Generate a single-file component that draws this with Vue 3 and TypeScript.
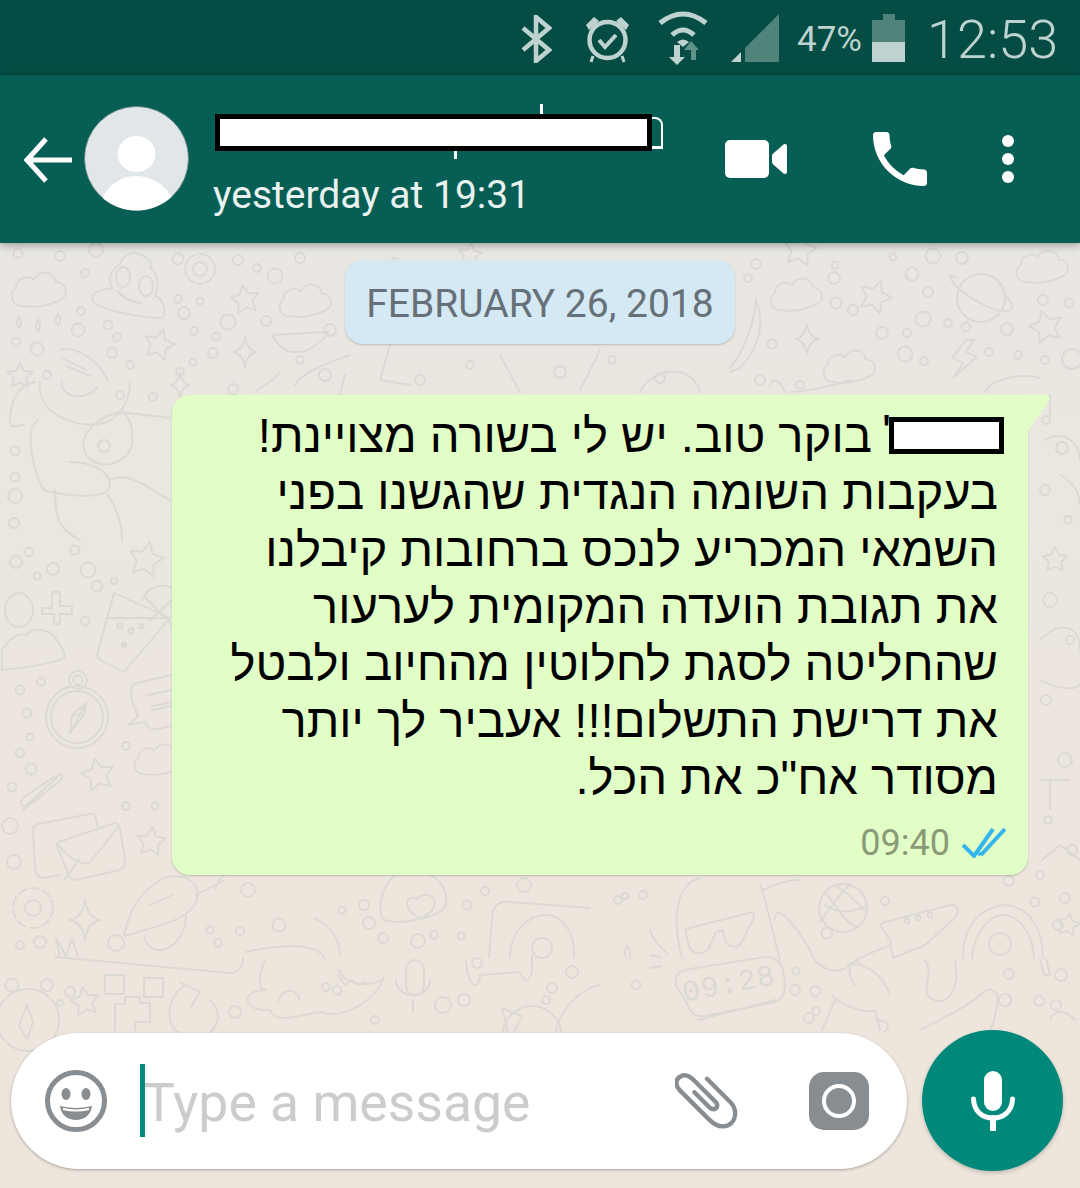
<script setup lang="ts">
// wallpaper doodles: [x, y, r]
const dots: number[][] = [
  [18,253,4.5],[60,256,5],[96,250,7],[85,273,4],[178,259,5.5],[238,260,5],[257,268,4],[275,276,7.5],[178,299,4],[200,301,3.5],[184,313,6],[81,311,4],[78,330,6.5],[108,325,4.5],[117,337,4],[228,322,7.5],[266,321,5],[194,331,4],[216,337,4],[16,342,4],[37,349,6.5],[112,353,5],[130,365,4],[193,362,3.5],[213,353,5],[180,372,4],[47,375,4],[153,397,4],[233,389,5],[15,451,4.5],[15,477,4.5],[15,496,7],[14,523,5],
  [756,264,5],[748,278,4],[834,278,6],[835,265,3.5],[912,274,6.5],[893,257,3.5],[933,256,7.5],[962,258,6],[928,292,5],[836,303,5.5],[853,310,5],[923,319,7.5],[882,333,6],[907,333,4],[948,323,4],[966,327,4.5],[1007,329,6],[1043,300,5],[1069,303,4.5],[772,344,4.5],[905,354,7.5],[924,361,4],[989,352,4],[1018,355,4],[1045,360,4],[1072,359,10],
  [16,562,6],[29,552,4.5],[37,576,3.5],[53,569,6],[75,550,4.5],[88,570,7.5],[97,586,5.5],[114,581,3],[85,621,4.5],[20,690,4.5],[41,682,4],[27,713,4.5],[30,737,3.5],[20,753,4.5],[31,769,5.5],[12,787,4.5],[126,746,4],[126,806,4],[155,806,3.5],[10,826,8],[14,862,7],[20,945,4],[40,942,6],[116,943,8],[47,985,6],[70,992,5],[60,1003,3],
  [235,1012,6],[218,943,4],[240,931,4.5],[210,930,3.5],[279,925,6.5],[342,910,3.5],[364,905,5],[369,923,6],[326,987,4],[337,990,4.5],[383,938,5],[418,941,7],[434,935,4],[461,936,3.5],[467,905,4.5],[485,891,4],[524,885,7],[443,1005,8],[464,1000,6],[552,988,5],[572,972,6],[546,1000,4],[375,1020,4],
  [618,900,4],[625,896,3],[643,895,4],[636,985,4.5],[796,971,3.5],[795,990,5],[815,991,5],[816,1011,4],[827,933,5.5],[885,901,4],[809,1018,5],[1009,881,5],[1035,902,4.5],[1065,898,5],[1058,925,5],[1009,974,5],[1005,1000,6],[1061,975,6],[1039,1001,5],[1056,1005,5],
  [1046,420,4],[1062,448,6],[1045,490,5],[1068,520,4],[1050,600,7],[1070,640,4],[1046,700,5],[1065,760,7],[1048,820,4],[1072,850,5],[1040,875,4],
  [300,360,4],[325,375,6],[395,262,4],[420,380,5],[470,365,4],[560,372,6],[612,360,4],[660,378,5],[300,258,5],[330,330,6],[760,380,5],[800,385,4],[120,395,4],
]
const stars: number[][] = [
  [245,300,15,-10],[159,345,16,15],[875,297,17,20],[800,250,17,10],[1046,327,17,-15],[98,775,17,-12],[151,842,15,5],[85,1002,15,-10],[20,376,13,0],[1068,925,12,10],[1055,560,13,0],[470,255,12,8],[146,560,18,12],
]
const sparks: number[][] = [[245,352,15],[807,339,15],[85,920,21],[180,385,12]]
const clouds: number[][] = [[10,268,1],[278,280,0.95],[769,274,0.95],[1015,246,0.95],[822,346,0.95],[133,740,0.9]]

function starPoints(cx: number, cy: number, r: number, rot: number) {
  const pts: string[] = []
  for (let i = 0; i < 10; i++) {
    const rad = i % 2 ? r * 0.5 : r
    const a = ((rot - 90 + i * 36) * Math.PI) / 180
    pts.push(`${(cx + rad * Math.cos(a)).toFixed(1)},${(cy + rad * Math.sin(a)).toFixed(1)}`)
  }
  return pts.join(" ")
}
function sparkPath(x: number, y: number, r: number) {
  const w = r * 0.75
  return `M${x} ${y - r}Q${x + 2} ${y - 2} ${x + w} ${y}Q${x + 2} ${y + 2} ${x} ${y + r}Q${x - 2} ${y + 2} ${x - w} ${y}Q${x - 2} ${y - 2} ${x} ${y - r}Z`
}

const lines = [
  "בעקבות השומה הנגדית שהגשנו בפני",
  "השמאי המכריע לנכס ברחובות קיבלנו",
  "את תגובת הועדה המקומית לערעור",
  "שהחליטה לסגת לחלוטין מהחיוב ולבטל",
  "את דרישת התשלום!!! אעביר לך יותר",
  'מסודר אח"כ את הכל.',
]
</script>

<template>
  <div class="phone">
    <div class="status">
      <svg class="st-bt" width="32" height="48" viewBox="0 0 32 48"><path d="M3 13 29 35 16 46V2L29 13 3 35" fill="none" stroke="#bed3cf" stroke-width="4.500" /></svg>
      <svg class="st-alarm" width="45" height="48" viewBox="0 0 45 48">
        <circle cx="22.500" cy="25" r="18" fill="none" stroke="#bed3cf" stroke-width="4.500" />
        <path d="M14 25l6 7 11-12" fill="none" stroke="#bed3cf" stroke-width="4" />
        <path d="M1 10 9 2l5 4-10 9zM44 10l-8-8-5 4 10 9z" fill="#bed3cf" />
        <path d="M8 41 6 47M37 41l2 6" stroke="#bed3cf" stroke-width="3" />
      </svg>
      <svg class="st-wifi" width="50" height="54" viewBox="0 0 50 54">
        <path d="M2 12Q25-6 48 12" fill="none" stroke="#bed3cf" stroke-width="5" />
        <path d="M14 24Q25 14 36 24" fill="none" stroke="#bed3cf" stroke-width="5" />
        <path d="M19 31Q25 26 31 31L25 36z" fill="#bed3cf" />
        <path d="M33 30 41 39H38V49H33V39H26z" fill="#5f9389" />
        <path d="M22 34V46H27L19 54 11 46H16V34z" fill="#bed3cf" />
      </svg>
      <svg class="st-signal" width="48" height="48" viewBox="0 0 48 48">
        <path d="M48 0V48H14V34z" fill="#50837a" />
        <path d="M0 48 10 38V48z" fill="#bed3cf" />
      </svg>
      <span class="st-pct">47%</span>
      <div class="st-batt"><i class="nub"></i><i class="empty"></i><i class="full"></i></div>
      <span class="st-time">12:53</span>
    </div>

    <header class="bar">
      <svg class="back" width="48" height="48" viewBox="0 0 48 48"><path d="M48 24H4M22 3 3 24l19 21" fill="none" stroke="#fff" stroke-width="5" /></svg>
      <svg class="avatar" width="105" height="105" viewBox="0 0 105 105">
        <defs><clipPath id="av"><circle cx="52.500" cy="52.500" r="52" /></clipPath></defs>
        <circle cx="52.500" cy="52.500" r="52" fill="#e1e6e8" stroke="#5d7f79" stroke-width="0.800" />
        <ellipse cx="52.500" cy="48" rx="19" ry="18" fill="#fff" />
        <path clip-path="url(#av)" d="M17 95C24 78 38 70 52 70S82 78 90 95L70 110H30z" fill="#fff" />
      </svg>
      <div class="who">
        <div class="name">
          <i class="mark m1"></i><i class="mark m2"></i><i class="mark m3"></i>
          <div class="redact"></div>
        </div>
        <div class="seen">yesterday at 19:31</div>
      </div>
      <div class="actions">
        <svg width="62" height="38" viewBox="0 0 62 38">
          <rect width="44" height="38" rx="5" fill="#fff" />
          <path d="M47 16c0-1 .4-1.800 1.200-2.400L58.500 4.500c1.300-1 3.500-.4 3.500 1.500v26c0 2-2.200 2.500-3.500 1.500L48.200 24.500c-.8-.6-1.200-1.400-1.200-2.400z" fill="#fff" />
        </svg>
        <svg class="call" width="54" height="54" viewBox="3 3 18 18"><path fill="#fff" d="M6.620 10.790c1.440 2.830 3.760 5.140 6.590 6.590l2.200-2.200c.27-.27.67-.36 1.020-.24 1.120.37 2.330.57 3.570.57.550 0 1 .45 1 1V20c0 .55-.45 1-1 1-9.390 0-17-7.610-17-17 0-.55.45-1 1-1h3.500c.55 0 1 .45 1 1 0 1.250.2 2.450.57 3.570.11.35.03.74-.25 1.020l-2.200 2.200z" /></svg>
        <div class="dots"><i></i><i></i><i></i></div>
      </div>
    </header>

    <main class="chat">
      <svg class="wall" width="1080" height="945" viewBox="0 243 1080 945" fill="none" stroke="#dbd9d3" stroke-width="1.900" stroke-linejoin="round" stroke-linecap="round">
        <circle v-for="(d, i) in dots" :key="'d' + i" :cx="d[0]" :cy="d[1]" :r="d[2]" />
        <polygon v-for="(s, i) in stars" :key="'s' + i" :points="starPoints(s[0], s[1], s[2], s[3])" />
        <path v-for="(s, i) in sparks" :key="'k' + i" :d="sparkPath(s[0], s[1], s[2])" />
        <g v-for="(c, i) in clouds" :key="'c' + i" :transform="`translate(${c[0]} ${c[1]}) scale(${c[2]})`">
          <path d="M12 38C2 38-2 26 6 20 6 10 18 6 24 12 28 2 44 2 46 14 56 14 60 28 50 32 38 38 24 40 12 38Z" />
        </g>
        <!-- poop -->
        <path d="M112 288C96 290 88 296 94 302 102 310 140 318 162 318 168 310 162 298 155 296 160 286 158 272 150 268 154 262 146 256 138 254 134 250 122 256 120 264 110 270 108 280 112 288Z" />
        <ellipse cx="123" cy="277" rx="7" ry="10" /><ellipse cx="146" cy="286" rx="7" ry="10" />
        <path d="M117 291Q130 303 142 303 125 302 117 291Z" />
        <!-- gear -->
        <circle cx="200" cy="269" r="7" /><circle cx="200" cy="269" r="15" stroke-dasharray="7 3" />
        <!-- drops -->
        <path d="M19 328q-4-4 0-11 4 7 0 11zM38 331q-4-4 0-12 4 8 0 12zM58 325q-5-6 0-11 5 7 0 11z" />
        <!-- wing and creature -->
        <path d="M60 350C72 346 96 356 108 380M62 358 86 370M66 366 90 376" />
        <path d="M40 382C36 410 70 428 100 424 120 420 130 400 130 382M62 382C60 398 88 402 98 386" />
        <path d="M35 382C20 384 10 400 10 420 10 430 18 425 24 425M38 420C22 430 36 480 44 490 60 495 100 500 108 490 115 478 100 462 70 462M122 412C100 415 80 432 84 450 90 470 124 470 132 445 134 425 128 415 122 412ZM120 412 170 418" />
        <circle cx="104" cy="446" r="6" />
        <path d="M55 490C55 520 60 530 80 540M108 495C118 510 122 525 122 540M110 480C130 470 150 490 170 500" />
        <!-- person -->
        <ellipse cx="19" cy="610" rx="14" ry="17" />
        <path d="M2 670V650C8 640 20 630 26 636 32 626 50 628 58 642 62 648 66 654 64 658 50 665 20 668 2 670Z" />
        <path d="M52 592h8v14h12v8H60v10h-6v-10H42v-6h10z" />
        <!-- glass and lemon -->
        <path d="M114 593 170 618 124 672 100 660 97 655zM110 618H168" />
        <circle cx="120" cy="626" r="2.500" /><circle cx="131" cy="631" r="2.500" /><circle cx="141" cy="626" r="2" />
        <circle cx="124" cy="645" r="2.500" fill="#dbd9d3" />
        <path d="M142 600A22 22 0 0 1 172 588M150 620 172 600M145 597 172 625" />
        <!-- compass -->
        <circle cx="77" cy="717" r="31" /><circle cx="77" cy="717" r="26" />
        <circle cx="78" cy="680" r="9" /><circle cx="78" cy="680" r="4.500" />
        <path d="M86 703 70 733 72 715zM86 703 84 715 70 733M72 715 84 715" />
        <!-- chat bubble -->
        <path d="M172 675 137 683C131 685 130 690 132 700L138 716 128 725 145 722 150 730 172 726" />
        <path d="M148 695 172 690M152 706 172 702M152 710 172 706" />
        <!-- paperclip -->
        <path d="M24 810 62 780C66 775 62 772 58 777L28 805M28 805C22 808 20 802 24 798L56 776" transform="translate(-1 0)" />
        <!-- envelopes -->
        <path d="M61 875 44 878C38 878 36 875 35 868L33 830C33 826 35 825 38 824L90 814C94 813 96 816 97 825" />
        <path d="M65 840 112 824C116 822 119 824 120 828L125 860C125 866 124 868 120 870L76 880C72 880 70 878 68 874L57 846C56 843 60 841 65 840ZM58 845C70 860 84 866 90 862L119 826M80 858 64 880" />
        <!-- gear two -->
        <circle cx="33" cy="908" r="8" /><circle cx="33" cy="908" r="20" stroke-dasharray="9 4" />
        <!-- drone -->
        <path d="M124 935C130 910 140 890 166 877 190 873 200 885 197 900 190 920 160 925 128 935 124 936 124 936 124 935ZM150 905 172 895M144 936C150 962 185 950 186 916M196 895 225 880M215 890C225 860 250 862 270 875" />
        <circle cx="248" cy="890" r="7" />
        <!-- fragments on seam -->
        <path d="M55 957 230 973Q243 972 243 958" />
        <path d="M60 957 56 938 66 956 72 938 78 956" />
        <!-- squares and steps -->
        <rect x="105" y="975" width="19" height="19" /><rect x="144" y="978" width="19" height="19" />
        <path d="M125 997H140V1003H150V1022H135V1030M125 997V1004H115V1030" />
        <!-- compass two -->
        <circle cx="28" cy="1020" r="31" /><circle cx="12" cy="985" r="6.500" />
        <path d="M27 1005 19 1025 27 1040 33 1022z" />
        <!-- arrow circle -->
        <path d="M186 985C166 995 164 1026 180 1033M210 1000C225 1015 216 1030 205 1036M180 982 200 992 190 1008" />
        <!-- heart helmet -->
        <path d="M395 875C378 890 378 915 384 920 400 925 440 918 446 905 448 890 440 880 430 875" />
        <path d="M418 917C402 910 405 893 417 899 422 892 437 893 434 907 432 912 425 918 418 917Z" />
        <!-- cloud creature -->
        <path d="M246 952C270 946 320 940 325 960M314 918C330 925 340 940 340 955" />
        <path d="M265 960C255 985 262 990 266 990 240 990 242 1012 270 1010 276 1025 300 1015 320 1012 345 1020 375 1000 384 978 375 985 350 990 338 970" />
        <path d="M300 1000C295 985 280 990 278 1002" />
        <path d="M338 975 345 985 352 980 358 985 366 982" />
        <!-- mic -->
        <rect x="406" y="960" width="18" height="35" rx="9" />
        <path d="M396 980C396 1000 430 1000 430 980M413 1000V1012" />
        <!-- record player -->
        <path d="M489 957 492 920C492 905 500 900 510 902L590 908M510 957C510 930 530 915 545 915 565 915 575 935 574 957" />
        <circle cx="542" cy="948" r="10" />
        <path d="M466 960C466 975 472 985 475 985 480 985 480 978 480 975L520 972C525 985 530 980 532 972L532 955" />
        <circle cx="477" cy="963" r="5" />
        <!-- play and citrus -->
        <circle cx="532" cy="1035" r="29" />
        <path d="M502 1008 522 1016 510 1040z" />
        <path d="M555 1040C556 1005 590 985 600 985" />
        <!-- sunglasses -->
        <path d="M682 958C672 920 675 885 700 878M760 884C766 900 772 930 780 960" />
        <path d="M685 929 753 912 754 918 740 945C730 950 725 945 723 930L716 932 708 950C698 956 690 954 688 942z" />
        <path d="M762 890C775 885 785 880 800 880" />
        <!-- digital clock -->
        <path d="M684 970 765 957C775 956 782 962 784 975 786 990 785 998 775 1002L705 1016C695 1017 690 1013 688 1005L676 985C675 977 678 972 684 970Z" />
        <path d="M698 1020 775 1000" />
        <text x="684" y="1002" transform="rotate(-11 684 1002)" class="digi">09:28</text>
        <path d="M650 930C655 945 665 950 668 955M650 955 662 958M650 968 662 966" />
        <path d="M625 955C625 940 630 945 630 958" />
        <!-- basketball -->
        <circle cx="843" cy="908" r="24" />
        <path d="M825 893C838 905 845 925 858 927M850 884C835 900 825 915 820 922M825 905C840 915 855 912 867 905M835 885C850 895 860 905 866 912" />
        <!-- skull blob -->
        <path d="M775 920C775 900 795 925 810 950 815 968 835 975 845 968 860 955 880 950 890 945M860 963C850 955 845 975 855 985" />
        <path d="M848 965C865 960 885 978 890 995M925 960C935 975 920 990 930 998 950 1010 960 985 955 960" />
        <!-- plane -->
        <path d="M885 922 950 905C958 905 960 910 955 918L925 945 893 958 890 940 880 925z" />
        <circle cx="907" cy="921" r="2.500" /><circle cx="918" cy="918" r="2.500" /><circle cx="930" cy="915" r="2.500" />
        <!-- horseshoe -->
        <path d="M963 958C963 910 1000 905 1003 905 1030 905 1043 930 1043 958M972 958C975 925 995 915 1003 915 1020 915 1033 935 1034 958" />
        <circle cx="1000" cy="944" r="11" />
        <path d="M1040 960 1044 975 1050 975 1046 958" />
        <!-- mug -->
        <path d="M832 995C835 1000 860 1015 875 1010L880 1030M835 1000 822 1030M876 1020C890 1020 890 1030 884 1032" />
        <!-- blob bottom right -->
        <path d="M920 1030C940 1020 970 1005 980 995 990 985 1000 990 997 1005 995 1015 995 1022 990 1030" />
        <path d="M1050 1018C1060 1005 1070 1015 1075 1020" />
        <!-- saturn -->
        <circle cx="981" cy="298" r="24" />
        <path d="M956 278C947 272 950 278 954 284 965 296 998 316 1010 310 1016 306 1008 298 1003 292" />
        <!-- bolt -->
        <path d="M966 340 952 358 963 363 953 378 977 357 966 352 974 340z" />
        <!-- banana -->
        <path d="M756 299C755 320 745 350 730 368M756 300C764 320 762 345 740 368L730 372" />
        <!-- plane and pizza near the chip -->
        <path d="M272 335 328 332C330 334 316 345 308 350 290 356 280 350 272 335Z" />
        <path d="M280 372C270 385 262 385 256 392M295 385C300 375 320 365 350 355M345 375 340 395M390 345 380 380 410 385M500 355 520 392M600 350 580 390M640 392C650 370 690 360 700 392" />
        <path d="M852 380C835 385 805 392 790 392M770 386C770 378 780 378 785 392M985 392C990 380 1020 372 1040 378M1050 395V420" />
        <!-- right column -->
        <path d="M1045 440C1060 430 1080 440 1080 460M1040 640C1060 620 1080 625 1080 650M1040 680C1060 690 1075 690 1080 685M1040 780H1070M1050 780V810M1042 860 1060 845 1080 860M1060 475C1070 480 1080 490 1080 505" />
      </svg>

      <div class="chip">FEBRUARY 26, 2018</div>

      <div class="bubble">
        <svg class="tail" width="22" height="36" viewBox="0 0 22 36"><path d="M0 0H17C22 0 23 4 20 7L0 36z" fill="#e1fec6" /></svg>
        <div class="msg" dir="rtl">
          <div class="line"><span class="hidden-name"></span><span class="tick">'</span> בוקר טוב. יש לי בשורה מצויינת!</div>
          <div v-for="(l, i) in lines" :key="i" class="line">{{ l }}</div>
        </div>
        <div class="meta">
          <span class="time">09:40</span>
          <svg width="44" height="30" viewBox="0 0 44 30" fill="none" stroke="#34b5f0" stroke-width="4">
            <path d="M1 17 12 28 31 1M19 27 43 1M17 25 19 27" />
          </svg>
        </div>
      </div>

      <div class="composer">
        <div class="pill">
          <svg class="emoji" width="64" height="64" viewBox="0 0 64 64">
            <circle cx="32" cy="32" r="28.500" fill="none" stroke="#888d91" stroke-width="5" />
            <ellipse cx="22" cy="25" rx="4.500" ry="6" fill="#888d91" />
            <ellipse cx="42" cy="25" rx="4.500" ry="6" fill="#888d91" />
            <path d="M16 37Q32 41 48 37C47 46 40 51 32 51S17 46 16 37Z" fill="#888d91" />
            <path d="M19 40Q32 43 45 40" stroke="#fff" stroke-width="2" fill="none" />
          </svg>
          <div class="input"><i class="caret"></i><span class="placeholder">Type a message</span></div>
          <svg class="clip" width="63" height="60" viewBox="35 50 65 62"><path d="M68 58 92 82C100 90 98 102 90 106 83 109 76 106 70 100L40 70C34 64 36 57 42 55 47 53 51 56 55 60L77 82C81 87 76 92 71 88L55 72" fill="none" stroke="#888d91" stroke-width="4.500" stroke-linecap="round" /></svg>
          <div class="cam"><i></i></div>
        </div>
        <button class="mic">
          <svg width="44" height="60" viewBox="0 0 44 60">
            <rect x="13" y="0" width="18" height="40" rx="9" fill="#fff" />
            <path d="M2.500 28C3 41 12 47 22 47S41 41 41.500 28" fill="none" stroke="#fff" stroke-width="5" stroke-linecap="round" />
            <path d="M22 47V58" stroke="#fff" stroke-width="6" stroke-linecap="round" />
          </svg>
        </button>
      </div>
    </main>
  </div>
</template>

<style scoped>
.phone { width: 1080px; height: 1184px; display: flex; flex-direction: column; overflow: hidden; font-family: Roboto, "Liberation Sans", sans-serif; }

.status { height: 75px; flex: none; background: #054d44; display: flex; align-items: center; color: #bed3cf; padding-left: 520px; }
.st-bt { margin-top: 2px; }
.st-alarm { margin-left: 33px; margin-top: 2px; }
.st-wifi { margin-left: 28px; margin-top: 0; }
.st-signal { margin-left: 23px; margin-top: 0; }
.st-pct { margin-left: 18px; font-size: 35px; width: 66px; margin-top: 4px; }
.st-batt { margin-left: 9px; width: 33px; height: 48px; display: flex; flex-direction: column; align-items: center; }
.st-batt i { display: block; }
.st-batt .nub { width: 12px; height: 6px; background: #50837a; }
.st-batt .empty { width: 33px; height: 22px; background: #50837a; }
.st-batt .full { width: 33px; height: 20px; background: #bed3cf; }
.st-time { margin-left: 22px; font-size: 54px; font-weight: 300; margin-top: 3px; }

.bar { height: 168px; flex: none; background: #075e55; display: flex; align-items: center; padding-left: 24px; box-shadow: 0 2px 8px rgba(0, 0, 0, 0.35); position: relative; z-index: 2; }
.back { flex: none; margin-top: 1px; }
.avatar { flex: none; margin-left: 12px; margin-top: -2px; }
.who { margin-left: 24px; width: 460px; display: flex; flex-direction: column; margin-top: 14px; }
.name { height: 37px; position: relative; margin-left: 2px; }
.redact { width: 437px; height: 37px; box-sizing: border-box; background: #fff; border: 5px solid #000; position: relative; }
.mark { position: absolute; background: #fff; display: block; }
.m1 { left: 325px; top: -10px; width: 3px; height: 10px; }
.m2 { left: 239px; top: 37px; width: 3px; height: 8px; }
.m3 { left: 432px; top: 3px; width: 16px; height: 32px; background: transparent; border: 2px solid #fff; border-left: none; border-radius: 0 8px 0 0; box-sizing: border-box; border-bottom-width: 3px; }
.seen { color: #eaf2f0; font-size: 39px; margin-top: 21px; line-height: 46px; white-space: nowrap; }
.actions { margin-left: auto; display: flex; align-items: center; padding-right: 66px; }
.call { margin-left: 86px; margin-top: -1px; }
.dots { margin-left: 75px; display: flex; flex-direction: column; gap: 6px; }
.dots i { width: 12px; height: 12px; border-radius: 50%; background: #fff; display: block; }

.chat { flex: 1; position: relative; display: flex; flex-direction: column; background: linear-gradient(#e9e7e2 0, #ebe6e0 35%, #eee6dd 70%, #eee6dc 100%); }
.wall { position: absolute; left: 0; top: 0; }
.digi { font-family: "Liberation Mono", monospace; font-size: 30px; fill: #dbd9d3; stroke: none; letter-spacing: 1px; }
.chip { position: relative; align-self: center; margin-top: 17px; width: 390px; height: 84px; box-sizing: border-box; background: #d5e9f4; border-radius: 18px; box-shadow: 0 1px 2px rgba(0, 0, 0, 0.2); color: #667078; font-size: 39px; padding-top: 3px; display: flex; align-items: center; justify-content: center; }
.bubble { position: relative; margin-top: 51px; margin-left: 172px; width: 856px; height: 480px; box-sizing: border-box; background: #e1fec6; border-radius: 18px 0 18px 18px; box-shadow: 0 1px 2px rgba(0, 0, 0, 0.2); display: flex; flex-direction: column; padding: 12px 30px 0 0; }
.tail { position: absolute; left: 100%; top: 0; }
.msg { font-family: "Liberation Sans", sans-serif; font-size: 47.2px; line-height: 57px; color: #000; }
.line { white-space: nowrap; }
.hidden-name { display: inline-block; width: 115px; height: 37px; box-sizing: border-box; background: #fff; border: 5px solid #000; vertical-align: -2px; margin-right: -6px; }
.tick { position: relative; top: -4px; margin-right: -2px; margin-left: -3px; }
.meta { display: flex; align-items: center; justify-content: flex-end; margin-top: 16px; margin-right: -8px; gap: 12px; }
.time { color: #8a9a78; font-size: 36px; }

.composer { position: relative; margin-top: auto; margin-bottom: 13px; padding: 0 17px 0 11px; display: flex; align-items: center; gap: 15px; }
.pill { flex: 1; height: 136px; background: #fff; border-radius: 68px; box-shadow: 0 1px 3px rgba(0, 0, 0, 0.3); display: flex; align-items: center; padding: 0 38px 0 33px; }
.emoji { flex: none; }
.input { margin-left: 32px; display: flex; align-items: center; height: 73px; position: relative; }
.caret { position: absolute; left: 0; top: 0; width: 5px; height: 73px; background: #00897b; display: block; }
.placeholder { margin-left: 3px; color: #cccccc; font-size: 53.5px; white-space: nowrap; padding-top: 4px; }
.clip { margin-left: auto; flex: none; }
.cam { margin-left: 71px; width: 60px; height: 58px; background: #888d91; border-radius: 15px; display: flex; align-items: center; justify-content: center; flex: none; }
.cam i { width: 34px; height: 34px; box-sizing: border-box; border: 4px solid #fff; border-radius: 50%; display: block; }
.mic { width: 141px; height: 141px; flex: none; border: 0; padding: 0; border-radius: 50%; background: #00897b; box-shadow: 0 2px 4px rgba(0, 0, 0, 0.2); display: flex; align-items: center; justify-content: center; }
</style>

<style>
html, body { margin: 0; background: #eee6dc; }
</style>
